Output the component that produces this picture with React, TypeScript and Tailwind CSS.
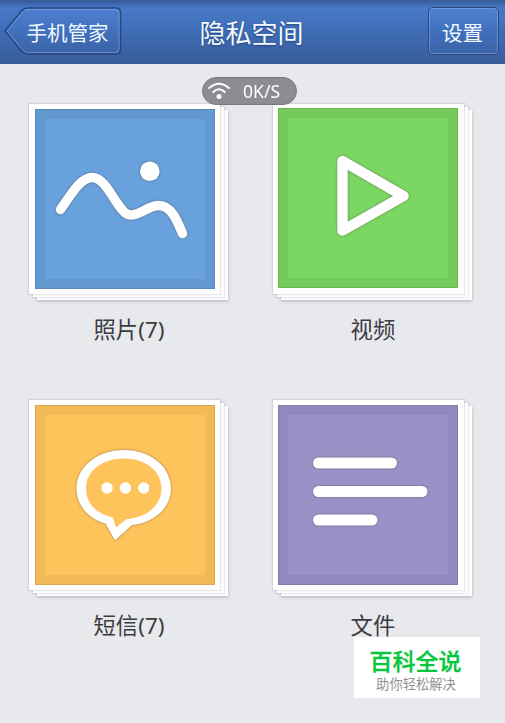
import type { ReactNode } from 'react'
import clsx from 'clsx'

interface TileProps {
  label: string
  frame: string
  fill: string
  children: ReactNode
}

function Tile({ label, frame, fill, children }: TileProps) {
  return (
    <div className="flex h-[296px] w-[200px] flex-col">
      <div className="relative h-[197px] w-[200px]">
        {/* stacked sheets behind the cover */}
        <div className="absolute top-[6px] left-[8px] h-[190px] w-[191px] bg-white shadow-[0_1px_3px_rgba(60,60,80,0.35)]" />
        <div className="absolute top-[3px] left-[4px] h-[190px] w-[191px] bg-white shadow-[0_0_1px_1px_rgba(90,80,80,0.13)]" />
        <div
          className={clsx(
            'absolute top-0 left-0 h-[190px] w-[191px] bg-white shadow-[0_0_1px_1px_rgba(90,80,80,0.14)]',
            frame
          )}
        >
          <div className={clsx('flex h-[180px] w-[180px] border-[10px] outline-1 -outline-offset-1 outline-black/10', fill)}>
            {children}
          </div>
        </div>
      </div>
      <p className="mt-[13px] text-center text-[22.400px] leading-[32px] text-[#3c3c3e]">{label}</p>
    </div>
  )
}

const iconClass = '-m-[10px] h-[180px] w-[180px] shrink-0 drop-shadow-[0_0_1px_rgba(60,60,60,0.6)]'

function PhotoIcon() {
  return (
    <svg className={iconClass} viewBox="0 0 180 180" fill="none" stroke="#fff" strokeWidth={9.5} strokeLinecap="round">
      <path d="M25.500 100.500C36 86 45 68.500 57.500 68.500C73 68.500 83 106 95.500 106C106 106 113 96.500 124 96.500C136 96.500 142 111 147.500 124.500" />
      <circle cx="114.800" cy="62.300" r="9.800" fill="#fff" stroke="none" />
    </svg>
  )
}

function VideoIcon() {
  return (
    <svg className={iconClass} viewBox="0 0 180 180" fill="none" stroke="#fff" strokeWidth={10.5} strokeLinejoin="round">
      <path d="M64.500 53V122.500L125.500 88Z" />
    </svg>
  )
}

function MessageIcon() {
  return (
    <svg className={iconClass} viewBox="0 0 180 180" fill="none">
      <path
        d="M79.500 134.500L70.500 118.500C54 114 41.500 101 41.500 83.500C41.500 62 62 45 89 45C116 45 136 62 136 83.500C136 103 119 118 97 120L81 134.500Z"
        fill="#fff"
      />
      <path
        d="M81 122.500L77.800 112.500C61 108.500 51 98.500 51 83.500C51 66 67 53.500 89 53.500C110.500 53.500 126.500 66 126.500 83.500C126.500 99.500 113 112.500 91.500 114.200Z"
        className="fill-[#ffc35c]"
      />
      <g fill="#fff">
        <circle cx="72" cy="83" r="5.700" />
        <circle cx="90.400" cy="83" r="5.700" />
        <circle cx="108.700" cy="83" r="5.700" />
      </g>
    </svg>
  )
}

function FileIcon() {
  return (
    <svg className={iconClass} viewBox="0 0 180 180" fill="#fff">
      <rect x="35" y="52.500" width="84" height="11" rx="5.500" />
      <rect x="35" y="81" width="114.500" height="11" rx="5.500" />
      <rect x="35" y="109.500" width="64.500" height="11" rx="5.500" />
    </svg>
  )
}

function Header() {
  return (
    <header className="grid h-16 grid-cols-[1fr_auto_1fr] items-start bg-[linear-gradient(180deg,#385d98_0px,#3a64a8_3px,#4878c8_8px,#416fb9_28px,#395f9f_58px,#365b96_64px)] pt-[7px] pr-[6px] pl-[4px] text-[#f2faff] [text-shadow:0_1px_2px_rgba(20,40,90,0.55)]">
      <button className="relative h-[49px] w-[118px] text-left">
        <svg className="absolute inset-0" width="118" height="49" viewBox="0 0 118 49" fill="none">
          <defs>
            <linearGradient id="back" x1="0" y1="0" x2="0" y2="1">
              <stop offset="0" stopColor="#4f80d2" />
              <stop offset="0.5" stopColor="#4170bd" />
              <stop offset="1" stopColor="#3b63a6" />
            </linearGradient>
          </defs>
          <path d="M24 1H112Q116.500 1 116.500 5.500V42.500Q116.500 47 112 47H24Q20 47 17 43.500L1 24L17 4.500Q20 1 24 1Z" fill="url(#back)" stroke="#28477f" strokeWidth="1.500" />
          <path d="M24 2.500H111Q115 2.500 115 6.500V41.500Q115 45.500 111 45.500H24Q21 45.500 18.500 42.500L3 24L18.500 5.500Q21 2.500 24 2.500Z" stroke="#83a9e6" strokeOpacity="0.6" />
        </svg>
        <span className="relative ml-[22.5px] block text-[20.5px] leading-[52px] whitespace-nowrap">手机管家</span>
      </button>
      <h1 className="text-[26px] leading-[52px]">隐私空间</h1>
      <button className="h-[48px] w-[71px] justify-self-end rounded-[5px] border-[1.5px] border-[#28477f] bg-linear-to-b from-[#4f80d2] via-[#4170bd] to-[#3b63a6] pr-[2px] text-[20.5px] leading-[50px] shadow-[inset_0_0_0_1px_rgba(131,169,230,0.6)]">
        设置
      </button>
    </header>
  )
}

function SpeedBadge() {
  return (
    <div className="absolute top-[77px] left-[202px] flex h-[28px] w-[95px] items-center rounded-full border border-[#77797c] bg-[#8c8d90] pl-[5px] text-white">
      <svg width="22" height="18" viewBox="0 0 22 18" fill="none" stroke="#fff" strokeWidth={2} strokeLinecap="round">
        <path d="M1.200 6Q11 -2.500 20.800 6" />
        <path d="M5.300 10Q11 4.500 16.700 10" />
        <circle cx="11" cy="14.500" r="2.500" fill="#fff" stroke="none" />
      </svg>
      <span className="ml-[13px] inline-block origin-left scale-x-95 text-[18.5px] leading-[26px]">0K/S</span>
    </div>
  )
}

export default function App() {
  return (
    <div className="relative h-[723px] w-[505px] overflow-hidden bg-[#e7e9ed] font-['Noto_Sans','Noto_Sans_CJK_SC',sans-serif]">
      <Header />
      <main className="grid grid-cols-[244px_200px] pt-[40px] pl-[29px]">
        <Tile label="照片(7)" frame="pt-[5px] pl-[5.500px]" fill="bg-[#69a1dc] border-[#6299d0]">
          <PhotoIcon />
        </Tile>
        <Tile label="视频" frame="pt-[4px] pl-[5px]" fill="bg-[#7cd662] border-[#73cb5c]">
          <VideoIcon />
        </Tile>
        <Tile label="短信(7)" frame="pt-[5px] pl-[5.500px]" fill="bg-[#ffc35c] border-[#f2b957]">
          <MessageIcon />
        </Tile>
        <Tile label="文件" frame="pt-[5px] pl-[5px]" fill="bg-[#9a92c7] border-[#9189bd]">
          <FileIcon />
        </Tile>
      </main>
      <SpeedBadge />
      <div className="absolute top-[637px] left-[354px] flex h-[61px] w-[126px] flex-col items-center bg-white pt-[10px]">
        <strong className="mr-[3px] text-[23px] leading-[29px] font-medium text-[#06c73b] [-webkit-text-stroke:0.3px_currentColor]">
          百科全说
        </strong>
        <span className="mr-[2px] text-[13.3px] leading-[16px] text-[#929292]">助你轻松解决</span>
      </div>
    </div>
  )
}
